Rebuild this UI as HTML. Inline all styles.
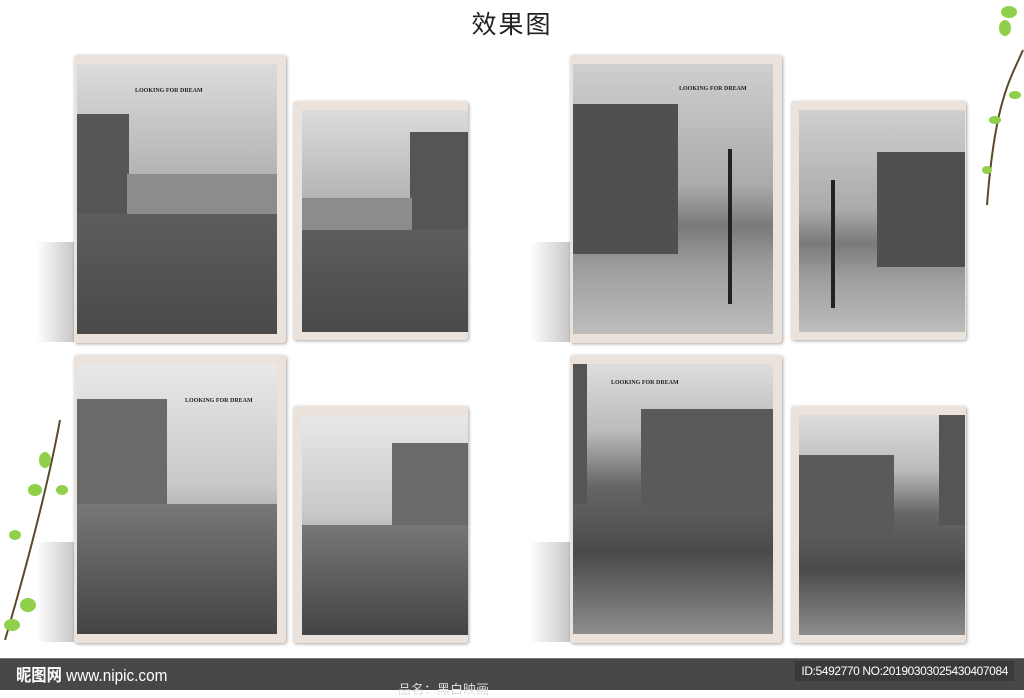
<!DOCTYPE html>
<html><head><meta charset="utf-8"><style>
body{margin:0;width:1024px;height:689px;background:#fff;position:relative;overflow:hidden;font-family:"Liberation Sans","Noto Sans CJK SC",sans-serif}
.t{position:absolute;left:0;width:1024px;top:5px;text-align:center;font-size:25px;color:#222;letter-spacing:2px}
.f{position:absolute;background:#ebe2dc;border-radius:3px;box-shadow:1px 1px 3px rgba(0,0,0,.35)}
.sh{position:absolute;background:linear-gradient(90deg,rgba(0,0,0,0),rgba(0,0,0,.22));}
.p{position:absolute;overflow:hidden}
.sky{background:linear-gradient(#dcdcdc,#b4b4b4 40%,#8a8a8a 60%,#5a5a5a)}
.sky2{background:linear-gradient(#e8e8e8,#c8c8c8 45%,#8d8d8d 70%,#676767)}
.sq{background:linear-gradient(#cfcfcf,#aaa 45%,#7a7a7a 60%,#9d9d9d 75%,#bdbdbd)}
.st{background:linear-gradient(#ddd,#bbb 25%,#666 45%,#4a4a4a 70%,#8d8d8d)}
.b{position:absolute;background:#3e3e3e}
.txt{position:absolute;font-family:"Liberation Serif",serif;font-size:6px;font-weight:bold;color:#222}
.bar{position:absolute;left:0;top:658px;width:1024px;height:31px;background:#474747;border-top:1px solid #777}
</style></head><body>
<div class="t">效果图</div>

<div class="sh" style="left:36px;top:242px;width:38px;height:100px"></div>
<div class="sh" style="left:36px;top:542px;width:38px;height:100px"></div>
<div class="sh" style="left:530px;top:242px;width:40px;height:100px"></div>
<div class="sh" style="left:530px;top:542px;width:40px;height:100px"></div>

<div class="f" style="left:74px;top:55px;width:212px;height:288px"></div>
<div class="p sky" style="left:77px;top:64px;width:200px;height:270px">
 <div class="txt" style="left:58px;top:24px">LOOKING FOR DREAM</div>
 <div class="b" style="left:0;top:50px;width:52px;height:170px;background:#555"></div>
 <div class="b" style="left:50px;top:110px;width:150px;height:45px;background:#8c8c8c"></div>
 <div class="b" style="left:0;top:150px;width:200px;height:120px;background:linear-gradient(#5d5d5d,#4a4a4a)"></div>
</div>
<div class="f" style="left:293px;top:101px;width:175px;height:239px"></div>
<div class="p sky" style="left:302px;top:110px;width:166px;height:222px">
 <div class="b" style="left:108px;top:22px;width:58px;height:170px;background:#555"></div>
 <div class="b" style="left:0;top:88px;width:110px;height:35px;background:#8c8c8c"></div>
 <div class="b" style="left:0;top:120px;width:166px;height:102px;background:linear-gradient(#5d5d5d,#4a4a4a)"></div>
</div>
<div class="f" style="left:74px;top:355px;width:212px;height:288px"></div>
<div class="p sky2" style="left:77px;top:364px;width:200px;height:270px">
 <div class="txt" style="left:108px;top:34px">LOOKING FOR DREAM</div>
 <div class="b" style="left:0;top:35px;width:90px;height:150px;background:#6a6a6a"></div>
 <div class="b" style="left:0;top:140px;width:200px;height:130px;background:linear-gradient(#777,#444)"></div>
</div>
<div class="f" style="left:293px;top:406px;width:175px;height:237px"></div>
<div class="p sky2" style="left:302px;top:415px;width:166px;height:220px">
 <div class="b" style="left:90px;top:28px;width:76px;height:130px;background:#6a6a6a"></div>
 <div class="b" style="left:0;top:110px;width:166px;height:110px;background:linear-gradient(#777,#444)"></div>
</div>
<div class="f" style="left:570px;top:55px;width:212px;height:288px"></div>
<div class="p sq" style="left:573px;top:64px;width:200px;height:270px">
 <div class="txt" style="left:106px;top:22px">LOOKING FOR DREAM</div>
 <div class="b" style="left:0;top:40px;width:105px;height:150px;background:#505050"></div>
 <div class="b" style="left:155px;top:85px;width:4px;height:155px;background:#222"></div>
</div>
<div class="f" style="left:791px;top:101px;width:175px;height:239px"></div>
<div class="p sq" style="left:799px;top:110px;width:166px;height:222px">
 <div class="b" style="left:78px;top:42px;width:88px;height:115px;background:#505050"></div>
 <div class="b" style="left:32px;top:70px;width:4px;height:128px;background:#222"></div>
</div>
<div class="f" style="left:570px;top:355px;width:212px;height:288px"></div>
<div class="p st" style="left:573px;top:364px;width:200px;height:270px">
 <div class="txt" style="left:38px;top:16px">LOOKING FOR DREAM</div>
 <div class="b" style="left:0;top:0;width:14px;height:140px;background:#555"></div>
 <div class="b" style="left:68px;top:45px;width:132px;height:100px;background:#5a5a5a"></div>
</div>
<div class="f" style="left:791px;top:406px;width:175px;height:237px"></div>
<div class="p st" style="left:799px;top:415px;width:166px;height:220px">
 <div class="b" style="left:140px;top:0;width:26px;height:110px;background:#555"></div>
 <div class="b" style="left:0;top:40px;width:95px;height:80px;background:#5a5a5a"></div>
</div>

<svg style="position:absolute;left:965px;top:0" width="59" height="210"><path d="M58 50 C45 80 30 100 22 205" stroke="#5a4a2a" stroke-width="2" fill="none"/><g fill="#8fcf4a"><ellipse cx="44" cy="12" rx="8" ry="6"/><ellipse cx="40" cy="28" rx="6" ry="8"/><ellipse cx="30" cy="120" rx="6" ry="4"/><ellipse cx="22" cy="170" rx="5" ry="4"/><ellipse cx="50" cy="95" rx="6" ry="4"/></g></svg>
<svg style="position:absolute;left:0;top:415px" width="75" height="230"><path d="M60 5 C50 60 30 140 5 225" stroke="#5a4a2a" stroke-width="2" fill="none"/><g fill="#8fcf4a"><ellipse cx="45" cy="45" rx="6" ry="8"/><ellipse cx="35" cy="75" rx="7" ry="6"/><ellipse cx="62" cy="75" rx="6" ry="5"/><ellipse cx="15" cy="120" rx="6" ry="5"/><ellipse cx="28" cy="190" rx="8" ry="7"/><ellipse cx="12" cy="210" rx="8" ry="6"/></g></svg>

<div class="bar">
 <div style="position:absolute;left:16px;top:2px;color:#fff;font-size:17px;font-weight:bold;transform:scaleX(.9);transform-origin:left">昵图网 <span style="font-weight:normal">www.nipic.com</span></div>
 <div style="position:absolute;left:398px;top:20px;color:#ddd;font-size:13px">品名：黑白映画</div>
 <div style="position:absolute;right:10px;top:2px;height:20px;background:#3a3a3a;color:#fff;font-size:12px;line-height:20px;padding:0 6px;letter-spacing:-0.4px">ID:5492770 NO:20190303025430407084</div>
</div>
</body></html>
